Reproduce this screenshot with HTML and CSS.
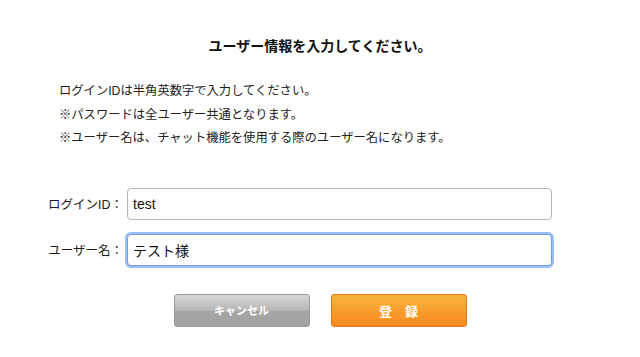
FILE: index.html
```html
<!DOCTYPE html>
<html lang="ja">
<head>
    <meta charset="UTF-8">
    <meta name="viewport" content="width=device-width, initial-scale=1.0">
    <title>ユーザー情報入力</title>
    <link rel="stylesheet" href="styles.css">
</head>
<body>
    <div class="container">
        <h1>ユーザー情報を入力してください。</h1>
        <div class="notes">
            <p>ログインIDは半角英数字で入力してください。</p>
            <p>※パスワードは全ユーザー共通となります。</p>
            <p>※ユーザー名は、チャット機能を使用する際のユーザー名になります。</p>
        </div>
        <form id="userForm" class="user-form">
            <div class="row">
                <label for="loginId">ログインID：</label>
                <input type="text" id="loginId" name="loginId" value="test">
            </div>
            <div class="row">
                <label for="userName">ユーザー名：</label>
                <input type="text" id="userName" name="userName" class="is-focus" value="テスト様">
            </div>
            <div class="buttons">
                <button type="button" class="btn btn-cancel">キャンセル</button>
                <button type="submit" class="btn btn-submit">登　録</button>
            </div>
        </form>
    </div>
</body>
</html>
```

FILE: styles.css
```css
body {
    font-family: "Liberation Sans", "Noto Sans CJK JP", sans-serif;
    margin: 0;
    padding: 0;
    background: #fff;
    color: #222;
}

.container {
    width: 640px;
    padding-top: 36px;
}

h1 {
    margin: 0;
    font-size: 14px;
    line-height: 20px;
    font-weight: bold;
    text-align: center;
    color: #111;
}

.notes {
    margin-top: 24px;
    padding-left: 59px;
}

.notes p {
    margin: 0;
    font-size: 12.3px;
    line-height: 23.5px;
}

.user-form {
    margin-top: 37px;
}

.row {
    display: flex;
    align-items: center;
    margin-bottom: 14px;
}

.row label {
    width: 126px;
    padding-right: 3px;
    box-sizing: border-box;
    text-align: right;
    font-size: 12.5px;
    color: #1a1a1a;
}

.row input {
    width: 425px;
    height: 32px;
    box-sizing: border-box;
    margin-left: 1px;
    padding: 0 5px;
    font-family: "Liberation Sans", "Noto Sans CJK JP", sans-serif;
    font-size: 14px;
    color: #111;
    border: 1px solid #b5b5b5;
    border-radius: 4px;
    outline: none;
    background: #fff;
}

.row input.is-focus {
    border-color: #6d9fe0;
    box-shadow: 0 0 0 2px rgba(120, 170, 240, 0.75);
}

.buttons {
    display: flex;
    justify-content: center;
    gap: 21px;
    margin-top: 28px;
}

.btn {
    width: 136px;
    height: 33px;
    border-radius: 3px;
    color: #fff;
    font-family: "Liberation Sans", "Noto Sans CJK JP", sans-serif;
    font-weight: bold;
    cursor: pointer;
}

.btn-cancel {
    font-size: 11px;
    border: 1px solid #9a9a9a;
    background: linear-gradient(#d6d6d6, #b6b6b6 50%, #a6a6a6 51%, #a2a2a2);
}

.btn-submit {
    font-size: 13px;
    border: 1px solid #e07a1c;
    background: linear-gradient(#fab43a, #f6891f);
}
```
